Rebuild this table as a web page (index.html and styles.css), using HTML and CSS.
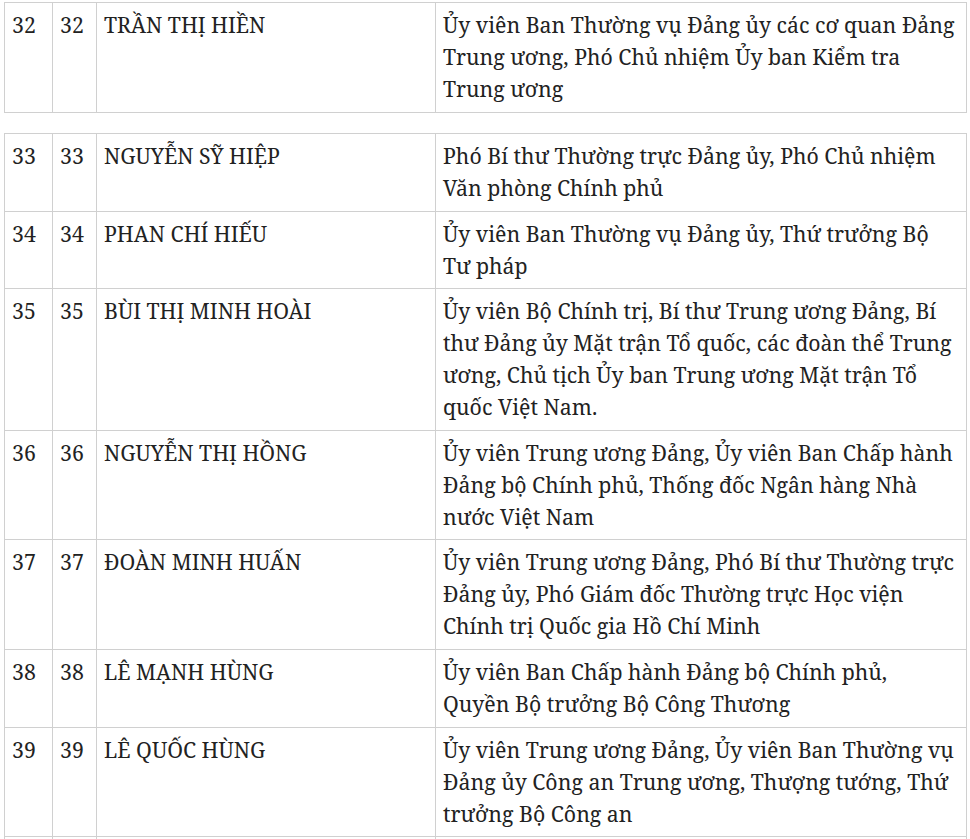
FILE: index.html
```html
<!DOCTYPE html>
<html lang="vi">
<head>
<meta charset="utf-8">
<title>Danh sách</title>
<link rel="stylesheet" href="styles.css">
</head>
<body>
<div class="page">
<table class="list list-first">
<colgroup><col class="c1"><col class="c2"><col class="c3"><col class="c4"></colgroup>
<tr><td>32</td><td>32</td><td>TRẦN THỊ HIỀN</td><td>Ủy viên Ban Thường vụ Đảng ủy các cơ quan Đảng Trung ương, Phó Chủ nhiệm Ủy ban Kiểm tra Trung ương</td></tr>
</table>
<table class="list">
<colgroup><col class="c1"><col class="c2"><col class="c3"><col class="c4"></colgroup>
<tr><td>33</td><td>33</td><td>NGUYỄN SỸ HIỆP</td><td>Phó Bí thư Thường trực Đảng ủy, Phó Chủ nhiệm Văn phòng Chính phủ</td></tr>
<tr><td>34</td><td>34</td><td>PHAN CHÍ HIẾU</td><td>Ủy viên Ban Thường vụ Đảng ủy, Thứ trưởng Bộ Tư pháp</td></tr>
<tr><td>35</td><td>35</td><td>BÙI THỊ MINH HOÀI</td><td>Ủy viên Bộ Chính trị, Bí thư Trung ương Đảng, Bí thư Đảng ủy Mặt trận Tổ quốc, các đoàn thể Trung ương, Chủ tịch Ủy ban Trung ương Mặt trận Tổ quốc Việt Nam.</td></tr>
<tr><td>36</td><td>36</td><td>NGUYỄN THỊ HỒNG</td><td>Ủy viên Trung ương Đảng, Ủy viên Ban Chấp hành Đảng bộ Chính phủ, Thống đốc Ngân hàng Nhà nước Việt Nam</td></tr>
<tr><td>37</td><td>37</td><td>ĐOÀN MINH HUẤN</td><td>Ủy viên Trung ương Đảng, Phó Bí thư Thường trực Đảng ủy, Phó Giám đốc Thường trực Học viện Chính trị Quốc gia Hồ Chí Minh</td></tr>
<tr><td>38</td><td>38</td><td>LÊ MẠNH HÙNG</td><td>Ủy viên Ban Chấp hành Đảng bộ Chính phủ, Quyền Bộ trưởng Bộ Công Thương</td></tr>
<tr><td>39</td><td>39</td><td>LÊ QUỐC HÙNG</td><td>Ủy viên Trung ương Đảng, Ủy viên Ban Thường vụ Đảng ủy Công an Trung ương, Thượng tướng, Thứ trưởng Bộ Công an</td></tr>
<tr class="empty"><td></td><td></td><td></td><td></td></tr>
</table>
</div>
</body>
</html>
```
FILE: styles.css
```css
html, body {
  margin: 0;
  padding: 0;
  background: #fff;
}
body {
  font-family: "Noto Serif", "DejaVu Serif", "Liberation Serif", serif;
  font-size: 21.3px;
  line-height: 32px;
  color: #222;
  overflow: hidden;
}
.page {
  padding: 2px 0 0 4px;
  width: 962px;
}
.list {
  border-collapse: collapse;
  table-layout: fixed;
  width: 962px;
  margin-bottom: 20px;
}
.list td {
  border: 1px solid #d0d0d0;
  padding: 6px 7px 6.6px 7px;
  vertical-align: top;
  text-align: left;
}
.list-first td {
  padding-bottom: 7px;
}
.empty td {
  height: 32px;
}
.c1 { width: 48px; }
.c2 { width: 44px; }
.c3 { width: 339px; }
.c4 { width: 531px; }
```
